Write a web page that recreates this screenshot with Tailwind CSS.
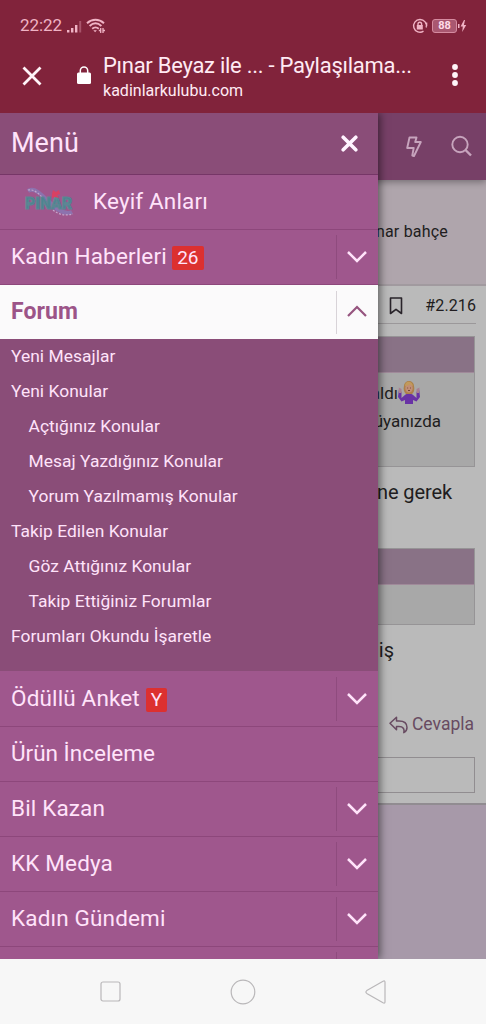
<!DOCTYPE html>
<html lang="tr">
<head>
<meta charset="utf-8">
<title>Kadınlar Kulübü</title>
<script src="https://cdn.jsdelivr.net/npm/@tailwindcss/browser@4"></script>
</head>
<body class="w-[486px] h-[1024px] overflow-hidden flex flex-col bg-[#f7f7f7] font-['Roboto',sans-serif]">
<header class="h-[113px] shrink-0 bg-[#81233b] text-[#ffeaf3] flex flex-col">
  <div class="h-[52px] flex items-center pl-5 pr-[19px] text-[#f0b3c5]">
    <span class="text-[17px] tracking-[-0.1px] w-[47px]">22:22</span>
    <svg class="w-[15px] h-[13px] mt-px" viewBox="0 0 15 13" fill="currentColor"><rect x="0" y="10" width="2.4" height="2.5"/><rect x="4" y="8" width="2.4" height="4.5"/><rect x="8" y="5" width="2.4" height="7.5"/><rect x="12.2" y="1" width="2" height="11.5" opacity=".35"/></svg>
    <svg class="w-[20px] h-[16px] ml-[4px]" viewBox="0 0 20 16" fill="none" stroke="currentColor" stroke-width="1.9"><path d="M1 5.2C6 .6 13 .6 18 5.2M3.6 8C7.500 4.500 11.500 4.500 15.400 8M6.200 10.800C8.500 8.800 10.500 8.800 12.800 10.800"/><path d="M7.300 12.200h3.600l-1.800 2z" fill="currentColor" stroke="none"/><path d="M14.700 10v5M17 10v5M12.800 12.500h2M17 12.500h2" stroke-width="1.300"/></svg>
    <svg class="w-[16px] h-[16px] ml-auto" viewBox="0 0 16 16" fill="none" stroke="currentColor" stroke-width="1.400"><path d="M11.500 13.200A6.400 6.400 0 1 1 14.200 9.500M14.600 4.500v3.800"/><rect x="4.800" y="7" width="6" height="4.500" fill="currentColor" stroke="none"/><path d="M6 7.500V6a1.800 1.800 0 0 1 3.600 0v1.500"/></svg>
    <span class="ml-[4px] mr-px w-[25px] h-[14px] rounded-[3px] border border-[#d58ba0] bg-[#a95770] text-[11px] font-bold leading-[12px] text-center text-[#ffdce7]">88</span>
    <svg class="w-[9px] h-[14px]" viewBox="0 0 9 14" fill="currentColor"><rect x="0" y="5" width="1.500" height="4"/><path d="M6 1 2.600 7.600h2.200L4.200 13 8.200 6H5.900L7 1z"/></svg>
  </div>
  <div class="h-[61px] flex items-start">
    <svg class="w-[20px] h-[20px] ml-[22px] mt-[14px]" viewBox="0 0 20 20" stroke="#fff4f8" stroke-width="2.800" fill="none"><path d="M1.500 1.500 18.500 18.500M18.500 1.500 1.500 18.500"/></svg>
    <svg class="w-[14px] h-[19px] ml-[35px] mt-[14px]" viewBox="0 0 14 19"><rect y="6.500" width="14" height="11.500" rx="1.500" fill="#fff"/><path d="M3.300 7V4.700a3.700 3.700 0 0 1 7.400 0V7" fill="none" stroke="#fff" stroke-width="1.500"/></svg>
    <div class="ml-[12px] w-[330px] whitespace-nowrap pt-px">
      <div class="text-[22px] leading-[26px] tracking-[-0.270px]">Pınar Beyaz ile ... - Paylaşılama...</div>
      <div class="text-[16px] leading-[24px] tracking-[0.020px]">kadinlarkulubu.com</div>
    </div>
    <svg class="w-[6px] h-[22px] ml-[19px] mt-[12px]" viewBox="0 0 6 22" fill="#fff4f8"><circle cx="3" cy="3" r="2.900"/><circle cx="3" cy="11" r="2.900"/><circle cx="3" cy="19" r="2.900"/></svg>
  </div>
</header>

<main class="relative h-[846px] shrink-0 overflow-hidden bg-[#a799a9] text-[#211d20]">
  <div class="flex flex-col">
    <div class="h-[67px] bg-[#774067] flex items-center justify-end gap-[28px] pr-[14px] text-[#c7a4bd] shadow-[0_2px_7px_rgba(0,0,0,.35)] z-[1]">
      <svg class="w-[18px] h-[22px]" viewBox="0 0 18 22" fill="none" stroke="currentColor" stroke-width="1.900" stroke-linejoin="round"><path d="M4.500 1.500h7L10.200 6h5.600L9 20l-1.700-.5L8.700 12H2.200z"/></svg>
      <svg class="w-[21px] h-[22px] -mt-[2px]" viewBox="0 0 21 22" fill="none" stroke="currentColor" stroke-width="1.900"><circle cx="9" cy="9.500" r="7.700"/><path d="m14.500 15 5.500 5.500" stroke-width="2.400"/></svg>
    </div>
    <div class="h-[104px] bg-[#afa5ac] flex justify-end pr-[38px] pt-[41px] text-[16px] leading-[22px] tracking-[0.2px]">Pınar bahçe</div>
    <section class="h-[521px] bg-[#bababa] border-y-2 border-b-[#918c91] border-t-[#a19a9f] pr-[11px]">
      <div class="h-[38px] pt-[3px] border-b border-[#9b989a] flex items-center justify-end -mr-[1px] text-[16px] tracking-[0.1px] gap-[22px]">
        <svg class="w-[14px] h-[18px]" viewBox="0 0 14 18" fill="none" stroke="#29242a" stroke-width="1.600" stroke-linejoin="round"><path d="M1.500 1h11v15.500L7 12.300 1.500 16.500z"/></svg>
        <span>#2.216</span>
      </div>
      <div class="mt-[12px] h-[131px] border border-[#969496] bg-[#a8a8a8]">
        <div class="h-[36px] bg-[#897286] border-b border-[#a08a9a]"></div>
        <div class="h-[28px] mt-[6px] pr-[54px] flex items-center justify-end text-[17px]"><span class="mt-px">kaldı</span>
          <svg class="w-[22px] h-[24px] -mt-[3px]" viewBox="0 0 22 24"><path d="M1 9 3.500 12v6l4-3.500C9 13 13 13 14.500 14.500l4 3.500v-6L21 8.500 22 17l-3.500 4.500L15 20v4H7v-4l-3.500 1.500L0 17z" fill="#6932a5"/><path d="M.8 7.500 3.500 9v4H1zM18.500 9 21.500 7.500 21 13h-2.500z" fill="#a98090"/><path d="M6 6a5 5 0 0 1 10 0c1 4-.5 7-2 8H8C6 12.500 5 9 6 6z" fill="#ad8049"/><ellipse cx="11" cy="8" rx="3.700" ry="4.600" fill="#c18e76"/><path d="M7 6c2 0 4-1 5-2 1 1 2 2 3 2-.5-5-8-6-8 0z" fill="#c29a5b"/><path d="M9.300 8h.8M12.200 8h.8M10 10.500h2" stroke="#6f4238"/></svg>
        </div>
        <div class="h-[28px] pt-px pr-[33px] flex items-center justify-end text-[17px] leading-none tracking-[0px]">rüyanızda</div>
      </div>
      <div class="h-[81px] pt-[12px] pr-[23px] text-right text-[20px] leading-[26px] tracking-[-0.1px]">ne gerek</div>
      <div class="h-[77px] border border-[#969496] bg-[#a8a8a8]"><div class="h-[36px] bg-[#897286] border-b border-[#a08a9a]"></div></div>
      <div class="h-[80px] pt-[12px] pr-[81px] text-right text-[20px] leading-[26px]">iş</div>
      <div class="h-[52px] pr-px pt-[6px] flex justify-end items-start gap-[4px] text-[17.500px] leading-[26px] text-[#684b61]">
        <svg class="w-[19px] h-[18px] mt-[5px]" viewBox="0 0 19 18" fill="none" stroke="currentColor" stroke-width="1.500" stroke-linejoin="round"><path d="M1 7.200 7.500 1.300V5H10c5 0 8 2.400 8 6.500 0 2.400-1.300 4.200-3.200 5.200.8-3.500-.5-6.200-4.800-6.200H7.500v3.200z"/></svg>
        <span>Cevapla</span>
      </div>
      <div class="h-[36px] border border-[#918d90]"></div>
    </section>
  </div>

  <aside class="absolute left-0 top-0 z-10 w-[378px] h-[846px] bg-[#9f578d] text-[#ffe3fa] shadow-[2px_0_8px_rgba(0,0,0,.5)] flex flex-col text-[22.500px] tracking-[0.150px] leading-[28px]">
    <div class="h-[62px] shrink-0 bg-[#8a4d78] border-b border-[#763667] flex items-center justify-between pl-[11px] pr-[20px] text-[27px] tracking-[0.050px]"><span class="-mt-px">Menü</span>
      <svg class="w-[17px] h-[17px] -mt-px" viewBox="0 0 17 17" stroke="#fff4ff" stroke-width="3.600" stroke-linecap="round"><path d="M2.200 2.200 14.800 14.800M14.800 2.200 2.200 14.800"/></svg>
    </div>
    <nav class="flex flex-col">
      <a class="h-[55px] shrink-0 border-b border-[#8d477b] flex items-center pl-[25px]">
        <svg class="w-[50px] h-[32px]" viewBox="0 0 50 32"><path d="M3 5C9 1 16 8 23 15s16 15 24 11" fill="none" stroke="#8c72ae" stroke-width="4"/><path d="M3 4c6-1 10 3 15 8M28 24c6 5 12 6 20 4" fill="none" stroke="#c3a7cc" stroke-width="1.200" stroke-dasharray="2 1.500"/><text x="0" y="23" textLength="47" lengthAdjust="spacingAndGlyphs" font-family="Roboto, sans-serif" font-size="17" font-weight="900" fill="#4b8590" stroke="#5d8694" stroke-width="1.200" letter-spacing="0">PINAR</text><path d="m27 8 1-4 3 2 3-2 1 4-3 1 2 3-4-1-3 1z" fill="#d94063"/></svg>
        <span class="ml-[18px] -mt-[2px]">Keyif Anları</span>
      </a>
      <a class="h-[55px] shrink-0 flex items-center pl-[11px] border-b border-[#8d477b]"><span class="-mt-[2px]">Kadın Haberleri</span><b class="ml-[5px] mt-[2px] h-[24px] w-[32px] rounded-[2px] bg-[#dc3030] text-[19px] leading-[24px] text-center font-normal tracking-normal">26</b>
        <span class="ml-auto w-[42px] h-[44px] border-l border-[#8f4b7e] flex items-center pl-[10px]"><svg class="w-[20px] h-[12px]" viewBox="0 0 20 12" fill="none" stroke="currentColor" stroke-width="2.500"><path d="m1 1 9 9 9-9"/></svg></span></a>
      <a class="h-[54px] shrink-0 flex items-center pl-[11px] bg-[#fbfafb] text-[#9c5488] font-bold"><span class="text-[23px] tracking-[0.100px]">Forum</span>
        <span class="ml-auto w-[42px] h-[43px] border-l border-[#d8d3d8] flex items-center pl-[10px]"><svg class="w-[20px] h-[12px] -mt-[2px]" viewBox="0 0 20 12" fill="none" stroke="#96547f" stroke-width="2.200"><path d="m1 11 9-9 9 9"/></svg></span></a>
      <div class="h-[332px] shrink-0 bg-[#8a4d78] pl-[11px] text-[17.400px] leading-[35.050px] tracking-[0.040px] whitespace-nowrap">
        <div>Yeni Mesajlar</div>
        <div>Yeni Konular</div>
        <div class="pl-[17.500px]">Açtığınız Konular</div>
        <div class="pl-[17.500px]">Mesaj Yazdığınız Konular</div>
        <div class="pl-[17.500px]">Yorum Yazılmamış Konular</div>
        <div>Takip Edilen Konular</div>
        <div class="pl-[17.500px]">Göz Attığınız Konular</div>
        <div class="pl-[17.500px]">Takip Ettiğiniz Forumlar</div>
        <div>Forumları Okundu İşaretle</div>
      </div>
      <a class="h-[56px] shrink-0 flex items-center pl-[11px] border-b border-[#8d477b]"><span class="-mt-[2px]">Ödüllü Anket</span><b class="ml-[6px] mt-[2px] h-[24px] w-[21px] rounded-[2px] bg-[#dc3030] text-[19px] leading-[24px] text-center font-normal tracking-normal">Y</b>
        <span class="ml-auto w-[42px] h-[44px] border-l border-[#8f4b7e] flex items-center pl-[10px]"><svg class="w-[20px] h-[12px]" viewBox="0 0 20 12" fill="none" stroke="currentColor" stroke-width="2.500"><path d="m1 1 9 9 9-9"/></svg></span></a>
      <a class="h-[55px] shrink-0 flex items-center pl-[11px] border-b border-[#8d477b]"><span class="-mt-[2px] tracking-[0px]">Ürün İnceleme</span></a>
      <a class="h-[55px] shrink-0 flex items-center pl-[11px] border-b border-[#8d477b]"><span class="-mt-[2px]">Bil Kazan</span>
        <span class="ml-auto w-[42px] h-[44px] border-l border-[#8f4b7e] flex items-center pl-[10px]"><svg class="w-[20px] h-[12px]" viewBox="0 0 20 12" fill="none" stroke="currentColor" stroke-width="2.500"><path d="m1 1 9 9 9-9"/></svg></span></a>
      <a class="h-[55px] shrink-0 flex items-center pl-[11px] border-b border-[#8d477b]"><span class="-mt-[2px]">KK Medya</span>
        <span class="ml-auto w-[42px] h-[44px] border-l border-[#8f4b7e] flex items-center pl-[10px]"><svg class="w-[20px] h-[12px]" viewBox="0 0 20 12" fill="none" stroke="currentColor" stroke-width="2.500"><path d="m1 1 9 9 9-9"/></svg></span></a>
      <a class="h-[55px] shrink-0 flex items-center pl-[11px] border-b border-[#8d477b]"><span class="-mt-[2px]">Kadın Gündemi</span>
        <span class="ml-auto w-[42px] h-[44px] border-l border-[#8f4b7e] flex items-center pl-[10px]"><svg class="w-[20px] h-[12px]" viewBox="0 0 20 12" fill="none" stroke="currentColor" stroke-width="2.500"><path d="m1 1 9 9 9-9"/></svg></span></a>
      <div class="flex justify-end pt-[5px]"><span class="w-[42px] h-[8px] border-l border-[#8f4b7e]"></span></div>
    </nav>
  </aside>
</main>

<footer class="h-[65px] shrink-0 bg-[#f7f7f7] flex items-center justify-between pl-[100px] pr-[99px]">
  <svg class="w-[21px] h-[21px]" viewBox="0 0 21 21" fill="none" stroke="#b9b7b9" stroke-width="1.200"><rect x="1" y="1" width="19" height="19" rx="2"/></svg>
  <svg class="w-[26px] h-[26px]" viewBox="0 0 26 26" fill="none" stroke="#b9b7b9" stroke-width="1.200"><circle cx="13" cy="13" r="11.800"/></svg>
  <svg class="w-[22px] h-[24px]" viewBox="0 0 22 24" fill="none" stroke="#b9b7b9" stroke-width="1.200"><path d="M1.800 10.600 18 1.300q2-1 2 1v19.400q0 2-2 1L1.800 13.400q-1.800-1.400 0-2.800z"/></svg>
</footer>
</body>
</html>
